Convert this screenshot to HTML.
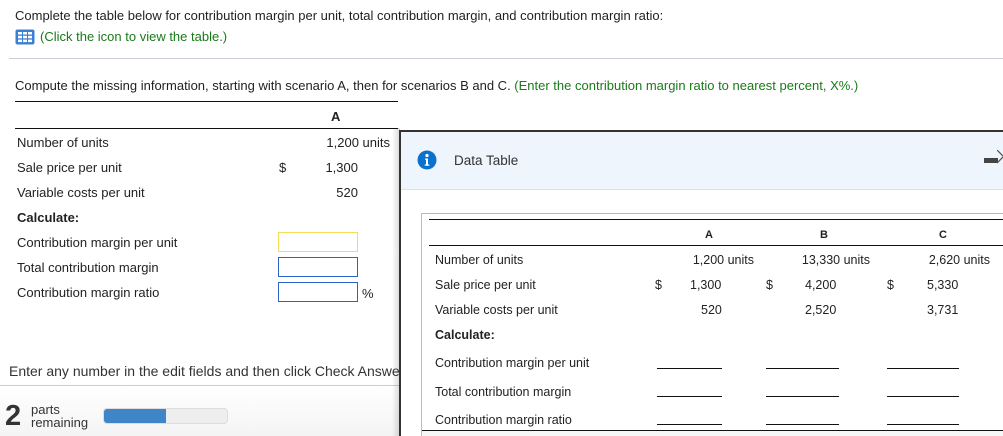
<!DOCTYPE html>
<html style="width:1003px;height:436px;overflow:hidden"><head><meta charset="utf-8"><style>
*{margin:0;padding:0;box-sizing:border-box}
body{width:1003px;height:436px;overflow:hidden;background:#fff;font-family:"Liberation Sans",Arial,sans-serif;font-size:13px;color:#222;position:relative}
.t{position:absolute;white-space:nowrap;line-height:14px}
.r{text-align:right}
.b{font-weight:bold}
.ln{position:absolute;background:#111;height:1px}
.in{position:absolute;width:80px;height:20px;border:1.5px solid #2d63c7;background:#fff}
.u{position:absolute;height:1px;background:#111}
.m{font-size:12.5px}
</style></head><body>
<div class="t" style="left:15px;top:9px;font-size:13px">Complete the table below for contribution margin per unit, total contribution margin, and contribution margin ratio:</div>
<svg style="position:absolute;left:15px;top:29px" width="20" height="16" viewBox="0 0 20 16"><rect x="0.5" y="0.5" width="19" height="15" rx="2" fill="#3b7fd3"/><g fill="#fff"><rect x="3" y="3" width="4" height="2.5"/><rect x="8" y="3" width="4" height="2.5"/><rect x="13" y="3" width="4" height="2.5"/><rect x="3" y="6.8" width="4" height="2.5"/><rect x="8" y="6.8" width="4" height="2.5"/><rect x="13" y="6.8" width="4" height="2.5"/><rect x="3" y="10.6" width="4" height="2.5"/><rect x="8" y="10.6" width="4" height="2.5"/><rect x="13" y="10.6" width="4" height="2.5"/></g></svg>
<div class="t" style="left:40px;top:30px;font-size:13px;color:#1a7a1a">(Click the icon to view the table.)</div>
<div style="position:absolute;left:9px;top:58px;width:994px;height:1px;background:#c9ced8"></div>
<div class="t" style="left:15px;top:79px;font-size:13px">Compute the missing information, starting with scenario A, then for scenarios B and C. <span style="color:#1a7a1a">(Enter the contribution margin ratio to nearest percent, X%.)</span></div>
<div class="ln" style="left:15px;top:101px;width:383px"></div>
<div class="t b" style="left:331px;top:110px">A</div>
<div class="ln" style="left:15px;top:128px;width:383px"></div>
<div class="t" style="left:17px;top:136px">Number of units</div><div class="t r" style="left:290px;width:100px;top:136px">1,200 units</div>
<div class="t" style="left:17px;top:161px">Sale price per unit</div><div class="t" style="left:279px;top:161px">$</div><div class="t r" style="left:300px;width:58px;top:161px">1,300</div>
<div class="t" style="left:17px;top:186px">Variable costs per unit</div><div class="t r" style="left:300px;width:58px;top:186px">520</div>
<div class="t b" style="left:17px;top:211px">Calculate:</div>
<div class="t" style="left:17px;top:236px">Contribution margin per unit</div>
<div class="t" style="left:17px;top:261px">Total contribution margin</div>
<div class="t" style="left:17px;top:286px">Contribution margin ratio</div>
<div class="in" style="left:278px;top:232px;border-color:#f4dc5a"></div>
<div class="in" style="left:278px;top:257px"></div>
<div class="in" style="left:278px;top:282px"></div>
<div class="t" style="left:362px;top:287px">%</div>
<div class="t" style="left:9px;top:364px;font-size:14px;color:#333">Enter any number in the edit fields and then click Check Answer.</div>
<div style="position:absolute;left:0;top:385px;width:400px;height:1px;background:#ccc"></div>
<div style="position:absolute;left:0;top:386px;width:400px;height:50px;background:linear-gradient(#fff,#f4f4f4)"></div>
<div class="t b" style="left:5px;top:401px;font-size:29px;line-height:30px;color:#333">2</div>
<div class="t" style="left:31px;top:403px;font-size:13px;line-height:13px;color:#333">parts<br>remaining</div>
<div style="position:absolute;left:103px;top:408px;width:125px;height:16px;border-radius:4px;background:#eee;border:1px solid #ddd;overflow:hidden"><div style="width:62px;height:100%;background:#3e86c8"></div></div>
<!-- modal -->
<div style="position:absolute;left:392px;top:128px;width:8px;height:308px;background:linear-gradient(90deg,rgba(0,0,0,0),rgba(0,0,0,.15))"></div>
<div style="position:absolute;left:399px;top:130px;width:604px;height:306px;background:#fff;border-left:2px solid #333;border-top:2px solid #333"></div>
<div style="position:absolute;left:401px;top:132px;width:602px;height:58px;background:#eff5fd;border-bottom:1px solid #d6e2ef"></div>
<svg style="position:absolute;left:417px;top:150px" width="20" height="20" viewBox="0 0 20 20"><circle cx="10" cy="10" r="9.5" fill="#0a72cc"/><circle cx="10" cy="5.5" r="1.6" fill="#fff"/><path d="M8 8.5h3v6h1.3v1.3H7.7v-1.3H9v-4.7H8z" fill="#fff"/></svg>
<div class="t" style="left:454px;top:154px;font-size:13.5px;color:#333">Data Table</div>
<div style="position:absolute;left:984px;top:158px;width:14px;height:5px;background:#444"></div>
<svg style="position:absolute;left:997px;top:150px" width="6" height="14" viewBox="0 0 6 14"><path d="M0 0L6 6M0 13L6 7" stroke="#555" stroke-width="1.3" fill="none"/></svg>
<div style="position:absolute;left:421px;top:213px;width:582px;height:223px;border:1px solid #bbb;border-right:none;border-bottom:none"></div>
<div class="ln" style="left:429px;top:219px;width:574px"></div>
<div class="t b" style="left:705px;top:228px;font-size:11px">A</div>
<div class="t b" style="left:820px;top:228px;font-size:11px">B</div>
<div class="t b" style="left:939px;top:228px;font-size:11px">C</div>
<div class="ln" style="left:429px;top:245px;width:574px"></div>
<div class="t m" style="left:435px;top:253px">Number of units</div>
<div class="t r m" style="left:654px;width:100px;top:253px">1,200 units</div>
<div class="t r m" style="left:770px;width:100px;top:253px">13,330 units</div>
<div class="t r m" style="left:890px;width:100px;top:253px">2,620 units</div>
<div class="t m" style="left:435px;top:278px">Sale price per unit</div>
<div class="t m" style="left:655px;top:278px">$</div><div class="t m" style="left:690px;top:278px">1,300</div>
<div class="t m" style="left:766px;top:278px">$</div><div class="t m" style="left:805px;top:278px">4,200</div>
<div class="t m" style="left:887px;top:278px">$</div><div class="t m" style="left:927px;top:278px">5,330</div>
<div class="t m" style="left:435px;top:303px">Variable costs per unit</div>
<div class="t m" style="left:701px;top:303px">520</div>
<div class="t m" style="left:805px;top:303px">2,520</div>
<div class="t m" style="left:927px;top:303px">3,731</div>
<div class="t b m" style="left:435px;top:328px">Calculate:</div>
<div class="t m" style="left:435px;top:356px">Contribution margin per unit</div>
<div class="t m" style="left:435px;top:385px">Total contribution margin</div>
<div class="t m" style="left:435px;top:413px">Contribution margin ratio</div>
<div class="u" style="left:657px;top:368px;width:65px"></div><div class="u" style="left:766px;top:368px;width:73px"></div><div class="u" style="left:887px;top:368px;width:72px"></div>
<div class="u" style="left:657px;top:396px;width:65px"></div><div class="u" style="left:766px;top:396px;width:73px"></div><div class="u" style="left:887px;top:396px;width:72px"></div>
<div class="u" style="left:657px;top:424px;width:65px"></div><div class="u" style="left:766px;top:424px;width:73px"></div><div class="u" style="left:887px;top:424px;width:72px"></div>
<div class="ln" style="left:422px;top:430px;width:581px"></div>
<div style="position:absolute;left:422px;top:431px;width:581px;height:5px;background:#f6f6f6"></div>
</body></html>
